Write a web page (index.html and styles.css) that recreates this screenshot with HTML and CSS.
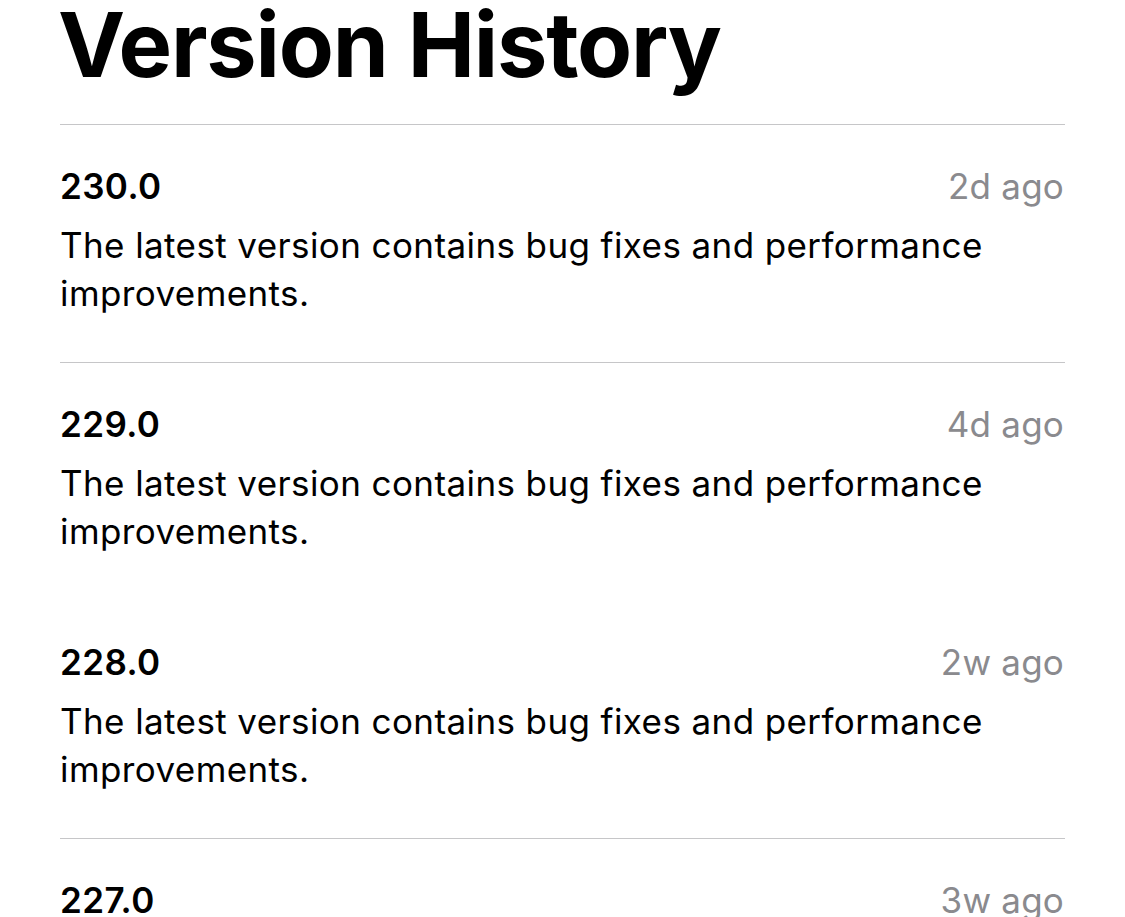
FILE: index.html
```html
<!DOCTYPE html>
<html lang="en">
<head>
<meta charset="utf-8">
<title>Version History</title>
<link rel="stylesheet" href="styles.css">
</head>
<body>
<main class="page">
  <h1 class="title">Version History</h1>
  <ul class="versions">
    <li class="version">
      <div class="version-head">
        <span class="version-num">230.0</span>
        <span class="version-date">2d ago</span>
      </div>
      <p class="version-notes">The latest version contains bug fixes and performance improvements.</p>
    </li>
    <li class="version">
      <div class="version-head">
        <span class="version-num">229.0</span>
        <span class="version-date">4d ago</span>
      </div>
      <p class="version-notes">The latest version contains bug fixes and performance improvements.</p>
    </li>
    <li class="version no-divider">
      <div class="version-head">
        <span class="version-num">228.0</span>
        <span class="version-date">2w ago</span>
      </div>
      <p class="version-notes">The latest version contains bug fixes and performance improvements.</p>
    </li>
    <li class="version">
      <div class="version-head">
        <span class="version-num">227.0</span>
        <span class="version-date">3w ago</span>
      </div>
      <p class="version-notes">The latest version contains bug fixes and performance improvements.</p>
    </li>
  </ul>
</main>
</body>
</html>
```
FILE: styles.css
```css
html, body {
  margin: 0;
  padding: 0;
  background: #ffffff;
  overflow: hidden;
}

body {
  font-family: Inter, "Noto Sans", "Liberation Sans", sans-serif;
  color: #000000;
}

.page {
  padding: 0 60px;
}

.title {
  margin: 0 0 34px -2px;
  font-size: 90px;
  line-height: 1;
  font-weight: 700;
  letter-spacing: -1.2px;
}

.versions {
  list-style: none;
  margin: 0;
  padding: 0;
}

.version {
  border-top: 1px solid #c6c6c8;
  padding: 37px 0 45px 0;
}

.version.no-divider {
  border-top-color: transparent;
}

.version-head {
  display: flex;
  justify-content: space-between;
  align-items: baseline;
  font-size: 35px;
  line-height: 48px;
  margin-bottom: 11px;
}

.version-num {
  font-weight: 600;
  letter-spacing: 0.4px;
}

.version-date {
  color: #8a8a8e;
  font-weight: 400;
  letter-spacing: 0.2px;
  padding-right: 1px;
}

.version-notes {
  margin: 0;
  font-size: 35px;
  line-height: 48px;
  font-weight: 400;
  letter-spacing: 0.4px;
  padding-right: 40px;
}
```
